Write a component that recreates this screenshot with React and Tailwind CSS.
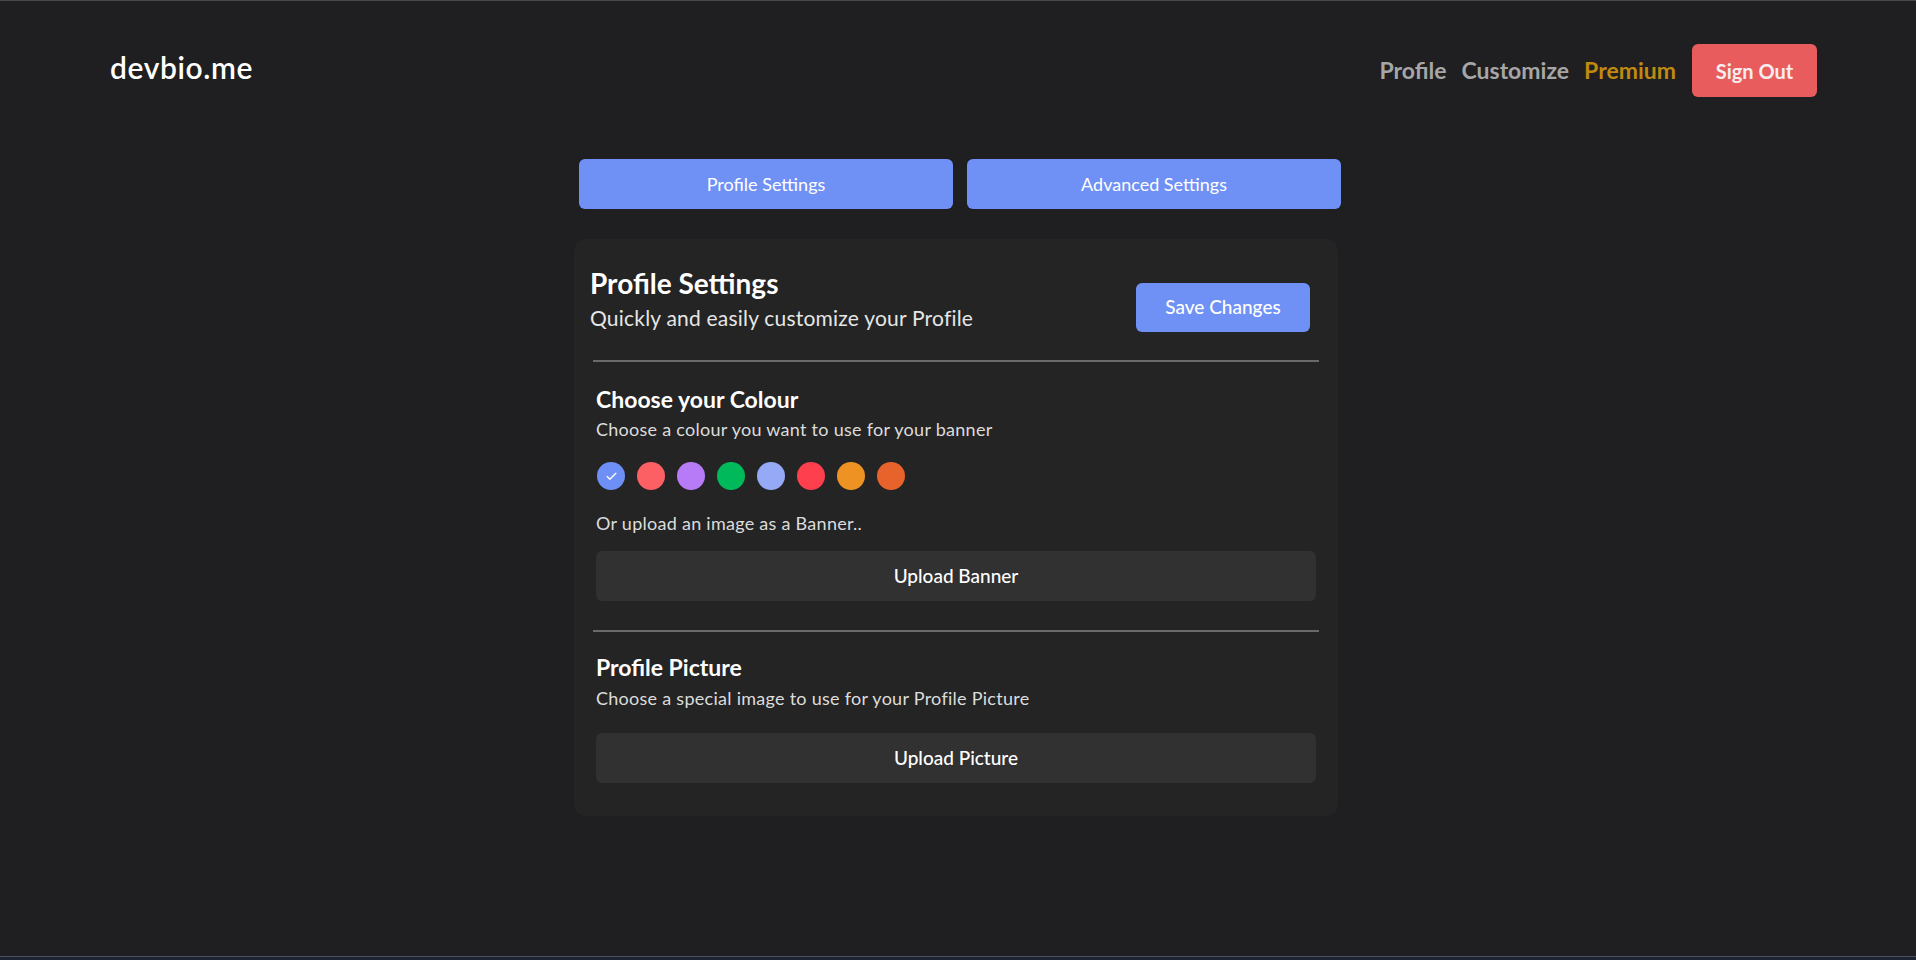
import { Check } from "lucide-react";

const colours = [
  "bg-[#6e8ff5]",
  "bg-[#fc6064]",
  "bg-[#b87bf7]",
  "bg-[#00b95a]",
  "bg-[#96a9f7]",
  "bg-[#fd3f4e]",
  "bg-[#ee9323]",
  "bg-[#e8622b]",
];

export default function App() {
  return (
    <div className="h-[960px] w-full flex flex-col bg-[#1f1f21] text-white font-['Lato',sans-serif] overflow-hidden">
      <div className="h-px w-full bg-[#4a4a4a]" />

      {/* NAVBAR */}
      <header className="flex items-center justify-between pl-[110px] pr-[99px] pt-[43px]">
        <a className="text-[30px] font-semibold tracking-[0.02em] -mt-[6px]">devbio.me</a>
        <nav className="flex items-center gap-[15px]">
          <a className="text-[23px] font-bold text-[#a6a6a6]">Profile</a>
          <a className="text-[23px] font-bold text-[#a6a6a6]">Customize</a>
          <a className="text-[23px] font-bold text-[#bf8a10]">Premium</a>
          <button className="ml-[1px] h-[53px] w-[125px] rounded-md bg-[#e95c5e] text-[20px] font-bold text-[#f5eded]">
            Sign Out
          </button>
        </nav>
      </header>

      <main className="flex-1 flex flex-col items-center">
        {/* TABS */}
        <div className="mt-[62px] w-[762px] ml-[4px] grid grid-cols-2 gap-[14px]">
          <button className="h-[50px] rounded-md bg-[#6f91f5] text-[18px]">Profile Settings</button>
          <button className="h-[50px] rounded-md bg-[#6f91f5] text-[18px]">Advanced Settings</button>
        </div>

        {/* CARD */}
        <div className="mt-[30px] mr-[4px] w-[764px] rounded-xl bg-[#242424] px-4 pb-[33px]">
          <div className="flex items-start justify-between pt-[27px] pr-[12px]">
            <div>
              <h1 className="text-[28px] font-bold leading-[34px]">Profile Settings</h1>
              <p className="mt-[4px] text-[21px] tracking-[0.01em] text-[#e6e6e6] leading-[28px]">
                Quickly and easily customize your Profile
              </p>
            </div>
            <button className="mt-[17px] h-[49px] w-[174px] rounded-md bg-[#6f91f5] text-[19px] font-medium">
              Save Changes
            </button>
          </div>

          <div className="mt-[28px] mx-[3px] h-[2px] bg-[#6a6a6a]" />

          {/* COLOUR */}
          <section className="px-[6px] pt-[22px]">
            <h2 className="text-[23px] font-bold leading-[30px]">Choose your Colour</h2>
            <p className="mt-[3px] text-[18px] tracking-[0.015em] text-[#dcdcdc] leading-[24px]">
              Choose a colour you want to use for your banner
            </p>
            <div className="mt-[21px] ml-[1px] flex gap-[12px]">
              {colours.map((c, i) => (
                <span
                  key={i}
                  className={`h-[28px] w-[28px] rounded-full flex items-center justify-center ${c}`}
                >
                  {i === 0 && <Check size={13} strokeWidth={2.5} className="text-white" />}
                </span>
              ))}
            </div>
            <p className="mt-[21px] text-[18px] tracking-[0.015em] text-[#dcdcdc] leading-[24px]">
              Or upload an image as a Banner..
            </p>
            <button className="mt-[16px] h-[50px] w-full rounded-md bg-[#313131] text-[19px] font-medium">
              Upload Banner
            </button>
          </section>

          <div className="mt-[29px] mx-[3px] h-[2px] bg-[#6a6a6a]" />

          {/* PROFILE PICTURE */}
          <section className="px-[6px] pt-[20px]">
            <h2 className="text-[23px] font-bold leading-[30px]">Profile Picture</h2>
            <p className="mt-[4px] text-[18px] tracking-[0.015em] text-[#dcdcdc] leading-[24px]">
              Choose a special image to use for your Profile Picture
            </p>
            <button className="mt-[23px] h-[50px] w-full rounded-md bg-[#313131] text-[19px] font-medium">
              Upload Picture
            </button>
          </section>
        </div>
      </main>

      <div className="h-px w-full bg-[#4b5263]" />
      <div className="h-[3px] w-full bg-[#1d2330]" />
    </div>
  );
}
